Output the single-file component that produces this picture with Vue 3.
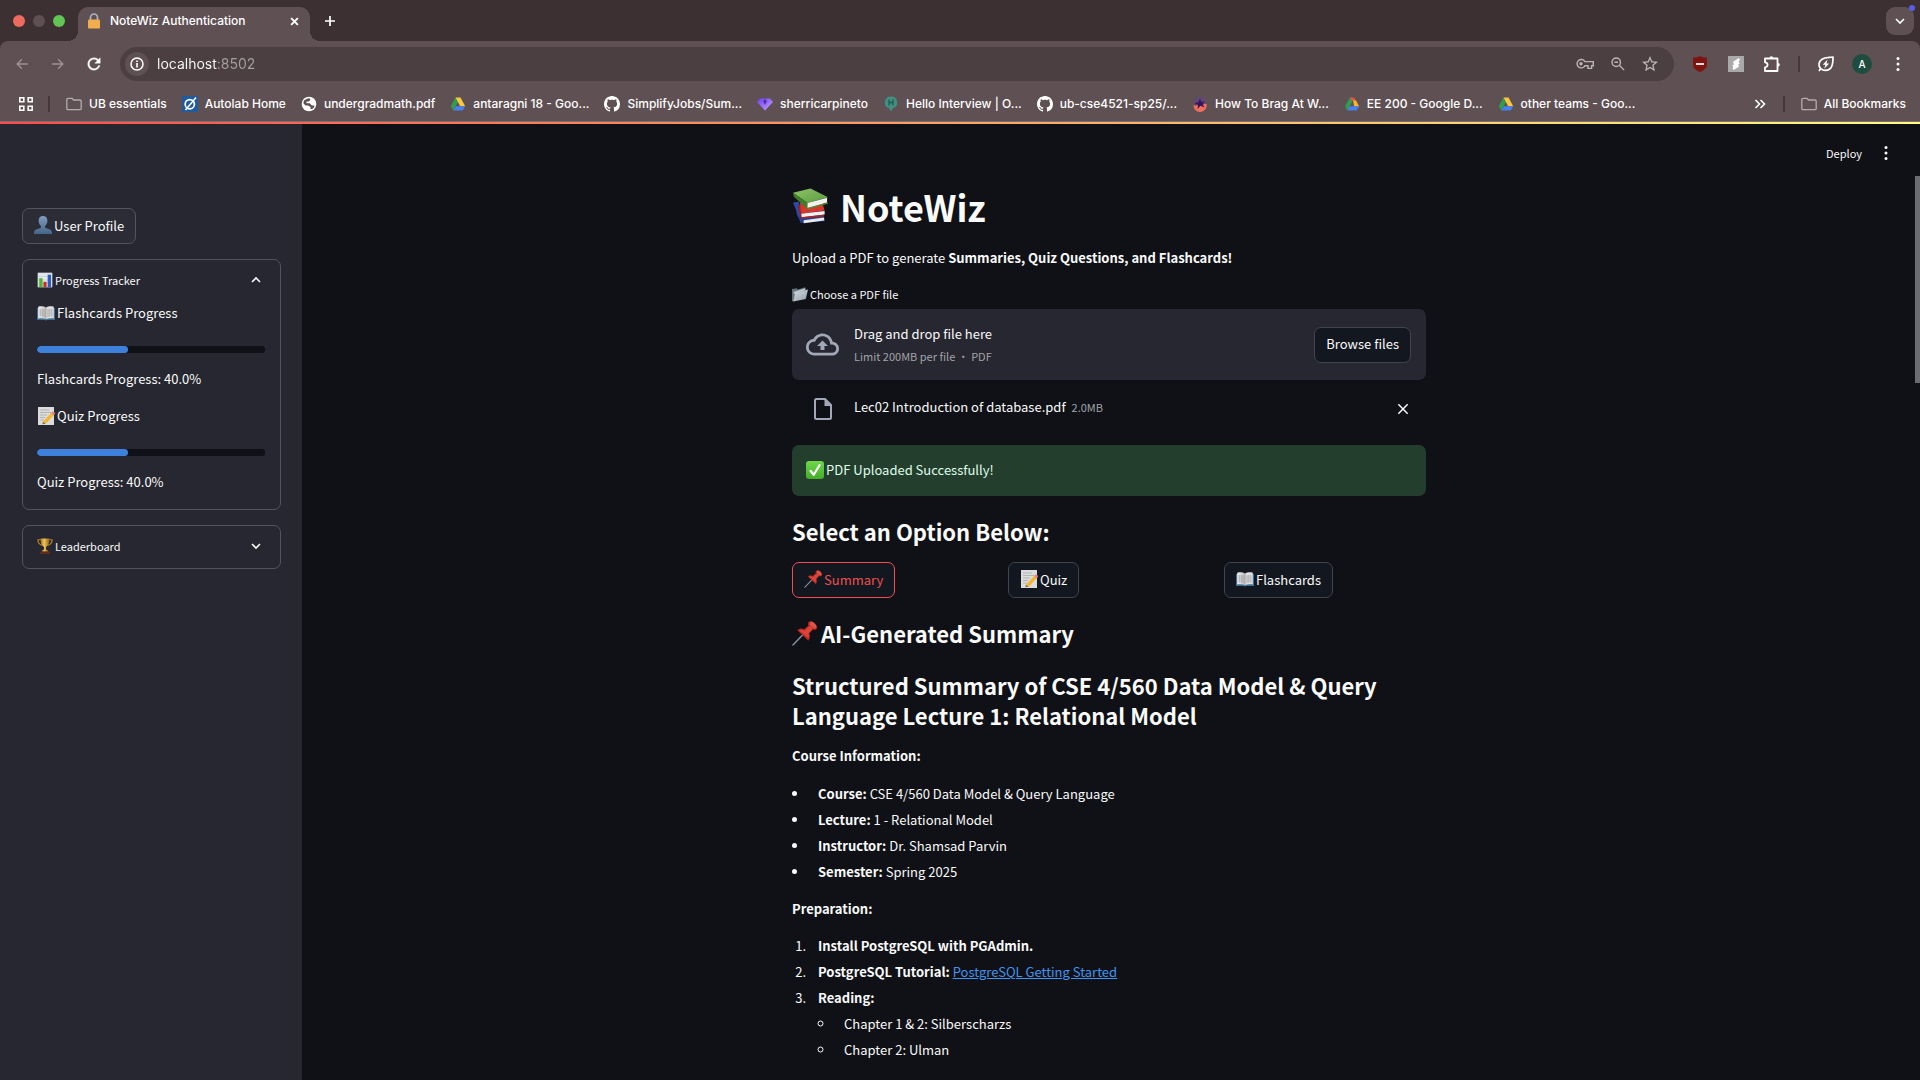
<script setup>
import { ref } from 'vue'

const address = ref('localhost:8502')
const selected = ref('summary')

const bookmarks = [
  { icon: 'folder', label: 'UB essentials' },
  { icon: 'autolab', label: 'Autolab Home' },
  { icon: 'globe', label: 'undergradmath.pdf' },
  { icon: 'drive', label: 'antaragni 18 - Goo...' },
  { icon: 'github', label: 'SimplifyJobs/Sum...' },
  { icon: 'gem', label: 'sherricarpineto' },
  { icon: 'hello', label: 'Hello Interview | O...' },
  { icon: 'github', label: 'ub-cse4521-sp25/...' },
  { icon: 'brag', label: 'How To Brag At W...' },
  { icon: 'drive-alt', label: 'EE 200 - Google D...' },
  { icon: 'drive', label: 'other teams - Goo...' },
]

const trackers = [
  { icon: 'book', name: 'Flashcards Progress', value: 40 },
  { icon: 'memo', name: 'Quiz Progress', value: 40 },
]

const options = [
  { key: 'summary', icon: 'pin', label: 'Summary' },
  { key: 'quiz', icon: 'memo', label: 'Quiz' },
  { key: 'flashcards', icon: 'book', label: 'Flashcards' },
]

const courseInfo = [
  { term: 'Course:', text: 'CSE 4/560 Data Model & Query Language' },
  { term: 'Lecture:', text: '1 - Relational Model' },
  { term: 'Instructor:', text: 'Dr. Shamsad Parvin' },
  { term: 'Semester:', text: 'Spring 2025' },
]
</script>

<template>
  <div class="window">
    <svg class="sprite" aria-hidden="true">
      <defs>
        <linearGradient id="g-user" x1="0" y1="0" x2="0" y2="1"><stop offset="0" stop-color="#7f9dbd" /><stop offset="1" stop-color="#456588" /></linearGradient>
        <linearGradient id="g-gold" x1="0" y1="0" x2="1" y2="0"><stop offset="0" stop-color="#a86f13" /><stop offset="0.4" stop-color="#f0c65a" /><stop offset="1" stop-color="#94600f" /></linearGradient>
        <linearGradient id="g-check" x1="0" y1="0" x2="0" y2="1"><stop offset="0" stop-color="#6fd84c" /><stop offset="1" stop-color="#43ad29" /></linearGradient>
        <linearGradient id="g-page" x1="0" y1="0" x2="1" y2="0"><stop offset="0" stop-color="#f3f3f3" /><stop offset="1" stop-color="#bdbdbd" /></linearGradient>
        <linearGradient id="g-folder" x1="0" y1="0" x2="1" y2="1"><stop offset="0" stop-color="#d5dce1" /><stop offset="1" stop-color="#929da6" /></linearGradient>
        <linearGradient id="g-green" x1="0" y1="0" x2="1" y2="1"><stop offset="0" stop-color="#8fc46b" /><stop offset="1" stop-color="#5a9a3d" /></linearGradient>
        <linearGradient id="g-gem" x1="0" y1="0" x2="1" y2="1"><stop offset="0" stop-color="#6d3df0" /><stop offset="1" stop-color="#c9a6ff" /></linearGradient>

        <!-- emoji -->
        <symbol id="i-user" viewBox="0 0 18 18">
          <path fill="url(#g-user)" d="M9 0C6.200 0 4.600 2 4.600 4.800c0 2.100.9 4.200 2.300 5.300v1.600L2.100 13.600C.7 14.200 0 15.300 0 17v1h18v-1c0-1.700-.7-2.800-2.100-3.400l-4.800-1.900v-1.600c1.400-1.100 2.300-3.200 2.300-5.300C13.400 2 11.800 0 9 0z" />
        </symbol>
        <symbol id="i-chart" viewBox="0 0 18 18">
          <path fill="#e4e9ee" d="M1 1h16v16H1z" />
          <path stroke="#b9c3cc" stroke-width=".6" fill="none" d="M1 5h16M1 9h16M1 13h16M1 1h16v16H1z" />
          <path fill="#4fb52f" d="M2.500 7h3.800v10H2.500z" />
          <path fill="#cf2c22" d="M7.200 11h3.600v6H7.200z" />
          <path fill="#2a5cc4" d="M12 3h3.700v14H12z" />
        </symbol>
        <symbol id="i-book" viewBox="0 0 18 18">
          <path fill="#3c6f92" d="M0 4h18v12h-8l-1 .8-1-.8H0z" />
          <path fill="url(#g-page)" d="M1.200 2.800C4 2 7 2.200 9 3.500v11.800c-2-1.200-5-1.400-7.800-.7z" />
          <path fill="#dfdfdf" d="M16.800 2.800C14 2 11 2.200 9 3.500v11.800c2-1.200 5-1.400 7.800-.7z" />
          <path stroke="#8f8f8f" stroke-width=".7" fill="none" d="M9 3.500v12M3.200 5v7.500M5.200 5v7.500M7 5.300V13M11 5.300V13M12.800 5v7.500M14.800 5v7.500" />
        </symbol>
        <symbol id="i-memo" viewBox="0 0 18 18">
          <path fill="#dcdcdc" d="M1 0h16v18H1z" />
          <path stroke="#a9a9a9" stroke-width=".8" fill="none" d="M3 3h9M3 5.500h11M3 8h7M3 10.500h5M3 13h4" />
          <path fill="#f2b632" d="M6 14.700 14 6l2.700 2.300-8 8.400z" />
          <path fill="#e27f7a" d="M14 6l1.300-1.300c1-.8 3.400 1.200 2.600 2.300l-1.200 1.300z" />
          <path fill="#8a6a35" d="M6 14.700l-.8 2.600 3.500-.6z" />
        </symbol>
        <symbol id="i-trophy" viewBox="0 0 18 18">
          <path fill="none" stroke="#b98223" stroke-width="1.300" d="M4.500 2H1c0 3.500 1.500 5.500 5 6.300M13.500 2H17c0 3.500-1.500 5.500-5 6.300" />
          <path fill="url(#g-gold)" d="M4 .5h10c0 5-1.300 8.600-4 9.500l.5 4h-3l.5-4C5.300 9.100 4 5.500 4 .5z" />
          <path fill="url(#g-gold)" d="M6 13.500h6l.7 2H5.300z" />
          <path fill="#5e2b18" d="M4 15.300h10L15 18H3z" />
        </symbol>
        <symbol id="i-books" viewBox="0 0 38 38">
          <path fill="#26409a" d="M4 25l5 11 25-2-4-10z" />
          <path fill="#e9e9ea" d="M12 33l21-2.600v3l-21 2.800z" />
          <path fill="#2c48a8" d="M1 15l6-1 3 14-3 2z" />
          <path fill="#9e2219" d="M6 18l3 13 2.500-2-2.500-11z" />
          <path fill="#d8362a" d="M8 15l23 0 2.500 8-24 3.500z" />
          <path fill="#f0efed" d="M9.500 26.500l24-3v3.600L10 30z" />
          <path fill="#a9251c" d="M9.500 30l23.500-2.400v1.600L10 31.600z" />
          <path fill="url(#g-green)" d="M1 5 19 .5 37 9.500 16 15.500z" />
          <path fill="#3f7d2a" d="M1 5l15 10.500V22L2 9z" />
          <path fill="#f1f1ef" d="M16 15.500 36 10v5l-20 5.500z" />
          <path fill="#4b8b32" d="M16 20.500 37 15v1.300L16 22z" />
        </symbol>
        <symbol id="i-files" viewBox="0 0 18 18">
          <path fill="#65717b" d="M0 3.500 5.500 2.500l1 1.500L15 1.500v5L2 17.500 0 17z" />
          <path fill="#bfc8ce" d="M2 6.500 15 2.500v2L2 9z" />
          <path fill="url(#g-folder)" d="M3.500 7.500 18 4l-2.500 10.500L1.500 17.500z" />
        </symbol>
        <symbol id="i-check" viewBox="0 0 18 18">
          <rect width="18" height="18" rx="3" fill="url(#g-check)" />
          <path fill="none" stroke="#fff" stroke-width="2.200" stroke-linecap="round" stroke-linejoin="round" d="M4.500 9.800 7.700 13.800 13.500 4.200" />
        </symbol>
        <symbol id="i-pin" viewBox="0 0 26 26">
          <path stroke="#8592a0" stroke-width="1.500" stroke-linecap="round" d="M1 25 12 13.500" />
          <path fill="#b3261e" d="M5.500 9.500c2.200-2 5-2.200 7.200-1l4.300-3.800c-.8-2-.2-4 1.500-4.500C21 0 26 4.500 26 7.500c-.5 1.700-2.500 2-4.500 1.300L18 13c1.200 2.500.8 5.200-1 7.500z" />
          <path fill="#d8433a" d="M7 9.700c2-1 4-.8 6 .3l5-4.600c2 .2 3.500 1.600 3.600 3L17 12.900c.8 1.800.8 3.600 0 5z" />
          <ellipse cx="22" cy="4.300" rx="4.300" ry="2.500" transform="rotate(44 22 4.300)" fill="#e05248" />
        </symbol>

        <!-- browser -->
        <symbol id="i-lock" viewBox="0 0 12 16">
          <path fill="none" stroke="#a9b7c4" stroke-width="1.700" d="M2.500 8V4.500a3.500 3.500 0 0 1 7 0V8" />
          <rect y="6.500" width="12" height="9" rx="1" fill="#f2ad4e" />
        </symbol>
        <symbol id="i-close" viewBox="0 0 24 24"><path fill="none" stroke="currentColor" stroke-width="2.200" d="M5 5l14 14M19 5 5 19" /></symbol>
        <symbol id="i-tabclose" viewBox="0 0 24 24"><path fill="none" stroke="currentColor" stroke-width="5" d="M3 3l18 18M21 3 3 21" /></symbol>
        <symbol id="i-plus" viewBox="0 0 12 12"><path fill="none" stroke="currentColor" stroke-width="1.700" d="M6 1v10M1 6h10" /></symbol>
        <symbol id="i-down" viewBox="0 0 12 12"><path fill="none" stroke="currentColor" stroke-width="1.600" d="M2 4l4 4 4-4" /></symbol>
        <symbol id="i-up" viewBox="0 0 12 12"><path fill="none" stroke="currentColor" stroke-width="1.600" d="M2 8l4-4 4 4" /></symbol>
        <symbol id="i-back" viewBox="0 0 24 24"><path fill="currentColor" d="M22 10.600H6.700l5.900-5.900L11 3.100 2.100 12l8.900 8.900 1.600-1.600-5.900-5.900H22z" /></symbol>
        <symbol id="i-forward" viewBox="0 0 24 24"><path fill="currentColor" d="M2 10.600h15.300l-5.900-5.900L13 3.100l8.900 8.900-8.900 8.900-1.600-1.600 5.900-5.900H2z" /></symbol>
        <symbol id="i-reload" viewBox="3 3 18 18"><path fill="currentColor" stroke="currentColor" stroke-width=".5" d="M17.650 6.350C16.200 4.900 14.210 4 12 4c-4.420 0-7.990 3.580-7.990 8s3.570 8 7.990 8c3.730 0 6.840-2.550 7.730-6h-2.080c-.82 2.330-3.040 4-5.650 4-3.310 0-6-2.690-6-6s2.690-6 6-6c1.660 0 3.140.69 4.220 1.780L13 11h7V4l-2.350 2.350z" /></symbol>
        <symbol id="i-info" viewBox="0 0 14 14"><circle cx="7" cy="7" r="6" fill="none" stroke="currentColor" stroke-width="1.500" /><path fill="currentColor" d="M6.200 3.400h1.600V5H6.200zM6.200 6h1.600v4.600H6.200z" /></symbol>
        <symbol id="i-key" viewBox="0 0 18 12">
          <path fill="none" stroke="currentColor" stroke-width="1.400" d="M8.900 3.600A4.200 4.200 0 1 0 8.900 7.800H12v2.600h3.600V7.800h1.700V3.600z" />
          <circle cx="5" cy="5.700" r="1.700" fill="currentColor" />
        </symbol>
        <symbol id="i-zoom" viewBox="0 0 16 16"><path fill="none" stroke="currentColor" stroke-width="1.600" d="M9.800 9.800 15 15M4 6h4" /><circle cx="6" cy="6" r="4.800" fill="none" stroke="currentColor" stroke-width="1.600" /></symbol>
        <symbol id="i-star" viewBox="2 2 20 20"><path fill="currentColor" d="M22 9.240l-7.190-.62L12 2 9.190 8.630 2 9.240l5.460 4.730L5.820 21 12 17.270 18.180 21l-1.630-7.030L22 9.240zM12 15.400l-3.760 2.270 1-4.280-3.320-2.880 4.380-.38L12 6.100l1.710 4.040 4.380.38-3.320 2.880 1 4.280L12 15.400z" /></symbol>
        <symbol id="i-shield" viewBox="0 0 16 16"><path fill="#7d1510" d="M8 0c2 1.300 4.500 1.700 7 1.700V8c0 4-3 6.500-7 8-4-1.500-7-4-7-8V1.700C3.500 1.700 6 1.300 8 0z" /><path fill="#efd9d8" d="M4 7h8v2H4z" /></symbol>
        <symbol id="i-scribe" viewBox="0 0 16 16"><rect width="16" height="16" fill="#a9a9a9" /><path fill="none" stroke="#fff" stroke-width="2.400" d="M11.500 3 5.500 7M11 6.500 5 10.500M10.500 9.500 5 13M5.500 7l5.500-.5M5 10.500l5.500-1" /></symbol>
        <symbol id="i-puzzle" viewBox="0 0 18 18"><path fill="none" stroke="currentColor" stroke-width="1.800" stroke-linejoin="round" d="M2 3.500h12.500V16H2v-3.700c3.400 0 3.400-5 0-5z" /><path fill="currentColor" d="M6.400 3.500c0-3 4-3 4 0zM14.500 7.800c3 0 3 4 0 4z" /></symbol>
        <symbol id="i-leaf" viewBox="0 0 18 18"><path fill="none" stroke="currentColor" stroke-width="1.700" stroke-linejoin="round" d="M2 16l1.700-2.400C1 11 1.500 6.500 5 4.200 8 2.200 12 2.700 16 2c0 4.500.2 8.500-2.500 11.300-2.600 2.700-6.800 2.900-9.800.3" /><path fill="currentColor" d="M10.500 4.500 5.800 9.800h2.600l-1.200 4 5-5.300H9.500z" /></symbol>
        <symbol id="i-dots" viewBox="0 0 4 16"><g fill="currentColor"><circle cx="2" cy="2.500" r="1.500" /><circle cx="2" cy="8" r="1.500" /><circle cx="2" cy="13.500" r="1.500" /></g></symbol>
        <symbol id="i-apps" viewBox="0 0 14 14"><path fill="none" stroke="currentColor" stroke-width="1.600" d="M.8.8h4v4h-4zM9.200.8h4v4h-4zM.8 9.200h4v4h-4zM9.200 9.200h4v4h-4z" /></symbol>
        <symbol id="i-more" viewBox="0 0 12 12"><path fill="none" stroke="currentColor" stroke-width="1.600" d="M1.500 2 5.500 6l-4 4M6.500 2l4 4-4 4" /></symbol>

        <!-- bookmarks -->
        <symbol id="i-folder" viewBox="0 0 16 16"><path fill="none" stroke="#b5acae" stroke-width="1.300" d="M.8 3.500a1.200 1.200 0 0 1 1.200-1.200h4l1.500 1.700H14a1.200 1.200 0 0 1 1.200 1.200V12.500a1.200 1.200 0 0 1-1.200 1.200H2A1.200 1.200 0 0 1 .8 12.500z" /></symbol>
        <symbol id="i-autolab" viewBox="0 0 16 16"><rect width="16" height="16" fill="#1f5b9d" /><circle cx="7.800" cy="8.200" r="4.600" fill="none" stroke="#fff" stroke-width="1.700" /><path stroke="#fff" stroke-width="1.500" d="M3.500 14 14 1.500" /></symbol>
        <symbol id="i-globe" viewBox="0 0 16 16"><circle cx="8" cy="8" r="7.300" fill="#fff" /><path fill="#5f5053" d="M3 4.500C5 3.800 6 2.200 8.500 2.300l1 1.700-2 1.500h-2v1.700h3.300l2 2.300h2.700c-.2 1.500-1 2.700-2.200 3.500L9.500 13v-2L7 9.500H4.700L2.600 7.800c-.2-1.200 0-2.300.4-3.300z" /></symbol>
        <symbol id="i-drive" viewBox="0 0 16 16"><path fill="#2f9e4f" d="M5.500 1.500 0.800 10.200l2.500 4.300L8 6z" /><path fill="#fbc93d" d="M5.500 1.500h5l4.700 8.700h-5z" /><path fill="#4a80ee" d="M5.800 10.200h9.400l-2.500 4.300H3.300z" /></symbol>
        <symbol id="i-drive-alt" viewBox="0 0 16 16"><path fill="#2f9e4f" d="M6 1.500 1 10.500l2.300 4L8 6V1.500z" /><path fill="#e6533f" d="M6 1.500h4l2 3.500H8z" /><path fill="#fbb42d" d="M9 4.500h3l3.200 6h-5z" /><path fill="#4a80ee" d="M5.800 10.200h9.400l-2.500 4.300H3.300z" /></symbol>
        <symbol id="i-github" viewBox="0 0 16 16"><path fill="#fff" d="M8 0C3.580 0 0 3.580 0 8c0 3.540 2.290 6.530 5.470 7.590.4.070.55-.17.55-.38 0-.19-.01-.82-.01-1.490-2.010.37-2.530-.49-2.690-.94-.09-.23-.48-.94-.82-1.130-.28-.15-.68-.52-.01-.53.63-.01 1.080.58 1.230.82.72 1.210 1.870.87 2.330.66.07-.52.28-.87.51-1.070-1.780-.2-3.640-.89-3.640-3.950 0-.87.31-1.590.82-2.150-.08-.2-.36-1.020.08-2.120 0 0 .67-.21 2.200.82.64-.18 1.320-.27 2-.27s1.360.09 2 .27c1.530-1.040 2.200-.82 2.200-.82.44 1.100.16 1.920.08 2.120.51.56.82 1.270.82 2.150 0 3.070-1.870 3.750-3.650 3.950.29.25.54.73.54 1.480 0 1.070-.01 1.930-.01 2.200 0 .21.15.46.55.38A8.010 8.010 0 0 0 16 8c0-4.420-3.580-8-8-8z" /></symbol>
        <symbol id="i-gem" viewBox="0 0 16 16"><path fill="url(#g-gem)" d="M3 2.500h10L16 6l-8 8.500L0 6z" /><path fill="#5a2bb8" d="M8 3l2 2-2 4-2-4z" /></symbol>
        <symbol id="i-hello" viewBox="0 0 16 16"><path fill="#3f9080" d="M8 .5a6 6 0 0 1 2 11.700L8 15.500l-2-3.300A6 6 0 0 1 8 .5z" /><path stroke="#24584e" stroke-width="1.300" d="M6 3.500v6M10 3.500v6M6 6.500h4" /></symbol>
        <symbol id="i-brag" viewBox="0 0 16 16"><circle cx="8" cy="6" r="6" fill="#5f4a70" /><path fill="#f0705c" d="M1.500 9C4 11 5 8 8 9s4-2 6.500-1c1 4.500-3 8-6.500 8S1.500 13 1.500 9z" /><path fill="#38125e" d="M8 2.500 9.300 6l3.700-.8L10.500 8l2 3.500L8.500 9.800 5.500 13 6 9 2.500 7l4-.8z" /></symbol>

        <!-- uploader -->
        <symbol id="i-cloud" viewBox="0 0 24 24"><path fill="currentColor" d="M19.350 10.040C18.670 6.590 15.640 4 12 4 9.110 4 6.600 5.640 5.350 8.040 2.340 8.360 0 10.910 0 14c0 3.310 2.690 6 6 6h13c2.760 0 5-2.240 5-5 0-2.640-2.050-4.780-4.650-4.960zM19 18H6c-2.210 0-4-1.790-4-4 0-2.050 1.530-3.760 3.560-3.970l1.070-.11.5-.95C8.080 7.140 9.940 6 12 6c2.620 0 4.880 1.860 5.390 4.430l.3 1.500 1.530.11c1.560.1 2.780 1.410 2.780 2.960 0 1.650-1.350 3-3 3zM8 13h2.550v3h2.900v-3H16l-4-4z" /></symbol>
        <symbol id="i-file" viewBox="0 0 18 22"><path fill="none" stroke="currentColor" stroke-width="2" stroke-linejoin="round" d="M2.500 1H11l6 6v12.500a1.500 1.500 0 0 1-1.500 1.500h-13A1.500 1.500 0 0 1 1 19.500v-17A1.500 1.500 0 0 1 2.500 1z" /><path fill="currentColor" d="M10.500 1v7H17z" /></symbol>
      </defs>
    </svg>

    <header class="chrome">
      <div class="tab-strip">
        <div class="lights"><i class="red"></i><i class="grey"></i><i class="green"></i></div>
        <div class="tab">
          <svg class="favicon"><use href="#i-lock" /></svg>
          <span class="tab-title">NoteWiz Authentication</span>
          <button class="icon-btn" aria-label="Close tab"><svg class="ic9"><use href="#i-tabclose" /></svg></button>
        </div>
        <button class="icon-btn new-tab" aria-label="New tab"><svg class="ic12"><use href="#i-plus" /></svg></button>
        <button class="icon-btn tab-search" aria-label="Search tabs"><svg class="ic12"><use href="#i-down" /></svg><i class="badge"></i></button>
      </div>

      <div class="toolbar">
        <nav class="nav-buttons">
          <button class="icon-btn dim" aria-label="Back"><svg class="ic14"><use href="#i-back" /></svg></button>
          <button class="icon-btn dim" aria-label="Forward"><svg class="ic14"><use href="#i-forward" /></svg></button>
          <button class="icon-btn" aria-label="Reload"><svg class="ic14"><use href="#i-reload" /></svg></button>
        </nav>
        <div class="omnibox">
          <button class="icon-btn site-info" aria-label="Site information"><svg class="ic14"><use href="#i-info" /></svg></button>
          <input v-model="address" class="address" type="text" aria-label="Address" spellcheck="false">
          <button class="icon-btn soft" aria-label="Passwords"><svg class="key"><use href="#i-key" /></svg></button>
          <button class="icon-btn soft" aria-label="Zoom"><svg class="ic14"><use href="#i-zoom" /></svg></button>
          <button class="icon-btn soft" aria-label="Bookmark this tab"><svg class="ic16"><use href="#i-star" /></svg></button>
        </div>
        <div class="extensions">
          <button class="icon-btn" aria-label="Ad blocker"><svg class="ic16"><use href="#i-shield" /></svg></button>
          <button class="icon-btn" aria-label="Scribe"><svg class="ic16"><use href="#i-scribe" /></svg></button>
          <button class="icon-btn" aria-label="Extensions"><svg class="ic18"><use href="#i-puzzle" /></svg></button>
          <i class="divider"></i>
          <button class="icon-btn" aria-label="Energy saver"><svg class="ic18"><use href="#i-leaf" /></svg></button>
          <button class="icon-btn avatar" aria-label="Profile">A</button>
          <button class="icon-btn" aria-label="Menu"><svg class="dots"><use href="#i-dots" /></svg></button>
        </div>
      </div>

      <nav class="bookmarks" aria-label="Bookmarks">
        <button class="icon-btn" aria-label="Apps"><svg class="ic14"><use href="#i-apps" /></svg></button>
        <i class="divider apps-divider"></i>
        <div class="bookmark-list">
          <a v-for="mark in bookmarks" :key="mark.label" href="#"><svg class="ic16"><use :href="`#i-${mark.icon}`" /></svg>{{ mark.label }}</a>
        </div>
        <button class="icon-btn more" aria-label="More bookmarks"><svg class="ic12"><use href="#i-more" /></svg></button>
        <i class="divider"></i>
        <a class="all-bookmarks" href="#"><svg class="ic16"><use href="#i-folder" /></svg>All Bookmarks</a>
      </nav>
    </header>

    <div class="decoration"></div>

    <div class="app">
      <aside class="sidebar">
        <button class="btn profile"><svg class="emoji"><use href="#i-user" /></svg>User Profile</button>

        <details class="expander" open>
          <summary><svg class="emoji small"><use href="#i-chart" /></svg>Progress Tracker<svg class="chevron"><use href="#i-up" /></svg></summary>
          <div class="expander-body">
            <section v-for="item in trackers" :key="item.name">
              <p><svg class="emoji"><use :href="`#i-${item.icon}`" /></svg>{{ item.name }}</p>
              <progress :value="item.value" max="100" :aria-label="item.name"></progress>
              <p>{{ item.name }}: {{ item.value.toFixed(1) }}%</p>
            </section>
          </div>
        </details>

        <details class="expander">
          <summary><svg class="emoji small"><use href="#i-trophy" /></svg>Leaderboard<svg class="chevron"><use href="#i-down" /></svg></summary>
        </details>
      </aside>

      <main class="main">
        <div class="app-menu">
          <button class="deploy">Deploy</button>
          <button class="icon-btn" aria-label="App menu"><svg class="dots"><use href="#i-dots" /></svg></button>
        </div>

        <div class="content">
          <h1><svg class="emoji title-emoji"><use href="#i-books" /></svg>NoteWiz</h1>
          <p class="intro">Upload a PDF to generate <strong>Summaries, Quiz Questions, and Flashcards!</strong></p>

          <label class="upload-label" for="pdf"><svg class="emoji small"><use href="#i-files" /></svg>Choose a PDF file</label>
          <input id="pdf" class="file-input" type="file" accept=".pdf">
          <div class="dropzone">
            <svg class="cloud"><use href="#i-cloud" /></svg>
            <div class="drop-text">
              <span>Drag and drop file here</span>
              <small>Limit 200MB per file • PDF</small>
            </div>
            <button class="btn">Browse files</button>
          </div>
          <div class="uploaded">
            <svg class="file-icon"><use href="#i-file" /></svg>
            <div class="file-name">Lec02 Introduction of database.pdf <small>2.0MB</small></div>
            <button class="icon-btn remove" aria-label="Remove file"><svg class="ic16"><use href="#i-close" /></svg></button>
          </div>

          <div class="success" role="status"><svg class="emoji"><use href="#i-check" /></svg>PDF Uploaded Successfully!</div>

          <h3>Select an Option Below:</h3>
          <div class="options">
            <div v-for="option in options" :key="option.key">
              <button class="btn" :class="{ active: selected === option.key }" @click="selected = option.key"><svg class="emoji"><use :href="`#i-${option.icon}`" /></svg>{{ option.label }}</button>
            </div>
          </div>

          <h3><svg class="emoji heading-emoji"><use href="#i-pin" /></svg>AI-Generated Summary</h3>

          <article class="summary">
            <h3>Structured Summary of CSE 4/560 Data Model &amp; Query Language Lecture 1: Relational Model</h3>
            <p><strong>Course Information:</strong></p>
            <ul>
              <li v-for="row in courseInfo" :key="row.term"><strong>{{ row.term }}</strong> {{ row.text }}</li>
            </ul>
            <p><strong>Preparation:</strong></p>
            <ol>
              <li><strong>Install PostgreSQL with PGAdmin.</strong></li>
              <li><strong>PostgreSQL Tutorial:</strong> <a href="#">PostgreSQL Getting Started</a></li>
              <li>
                <strong>Reading:</strong>
                <ul>
                  <li>Chapter 1 &amp; 2: Silberscharzs</li>
                  <li>Chapter 2: Ulman</li>
                </ul>
              </li>
            </ol>
          </article>
        </div>
        <div class="scroll-thumb"></div>
      </main>
    </div>
  </div>
</template>

<style>
body { background: #0f1116; }
</style>

<style scoped>
.window { display: flex; flex-direction: column; height: 100vh; overflow: hidden; color: #fafafa; font: 13px/23px "Noto Sans CJK SC", "Open Sans", sans-serif; }
.sprite { position: absolute; width: 0; height: 0; }
*, *::before, *::after { box-sizing: border-box; }
svg { flex: none; }
button { font: inherit; color: inherit; cursor: pointer; }
i { display: block; flex: none; }

.ic9 { width: 9px; height: 9px; }
.ic12 { width: 12px; height: 12px; }
.ic14 { width: 14px; height: 14px; }
.ic16 { width: 16px; height: 16px; }
.ic18 { width: 18px; height: 18px; }
.dots { width: 4px; height: 16px; }
.key { width: 18px; height: 12px; }
.icon-btn { display: flex; align-items: center; justify-content: center; flex: none; padding: 0; background: none; border: 0; }

/* browser frame */
.chrome { flex: none; background: #3c3033; color: #fff; font: 500 12px/16px Inter, "Liberation Sans", sans-serif; }
.tab-strip { display: flex; align-items: center; height: 41px; padding: 0 6px 0 13px; }
.lights { display: flex; gap: 8px; width: 65px; }
.lights i { width: 12px; height: 12px; border-radius: 50%; }
.red { background: #ed6a5e; }
.grey { background: #5f5053; }
.green { background: #61c554; }
.tab { position: relative; display: flex; align-items: center; align-self: flex-end; gap: 10px; width: 232px; height: 34px; padding: 0 11px 6px 10px; background: #5f5053; border-radius: 10px 10px 0 0; }
.tab::before, .tab::after { content: ""; position: absolute; bottom: 0; width: 10px; height: 10px; }
.tab::before { right: 100%; background: radial-gradient(circle at 0 0, transparent 10px, #5f5053 10px); }
.tab::after { left: 100%; background: radial-gradient(circle at 100% 0, transparent 10px, #5f5053 10px); }
.favicon { width: 12px; height: 16px; }
.tab-title { flex: 1; white-space: nowrap; }
.new-tab { margin-left: 14px; }
.tab-search { position: relative; width: 28px; height: 28px; margin-left: auto; background: #5f5053; border-radius: 9px; }
.badge { position: absolute; top: -2px; right: -1px; width: 6px; height: 6px; background: #5b5bea; border-radius: 50%; }
.toolbar { display: flex; align-items: center; height: 46px; padding: 0 12px 0 15px; background: #5f5053; border-radius: 8px 8px 0 0; }
.nav-buttons { display: flex; gap: 22px; width: 105px; }
.dim { color: #9c9194; }
.omnibox { display: flex; flex: 1; align-items: center; gap: 17px; height: 34px; padding: 0 16px 0 5px; background: #4b3f42; border-radius: 17px; }
.site-info { width: 24px; height: 24px; margin-right: -9px; background: #5f5053; border-radius: 50%; }
.address { flex: 1; min-width: 0; padding: 0; border: 0; outline: 0; font: 400 14px/20px Inter, "Liberation Sans", sans-serif; color: transparent; background: linear-gradient(90deg, #fff 60px, #a89fa1 60px); background-clip: text; -webkit-background-clip: text; }
.soft { color: #bcb4b6; }
.extensions { display: flex; align-items: center; gap: 16px; padding-left: 16px; }
.extensions .icon-btn { width: 20px; height: 20px; }
.divider { width: 2px; height: 16px; background: #44383b; }
.avatar { background: #1e4d40; border-radius: 50%; font-size: 10px; }
.bookmarks { display: flex; align-items: center; height: 34px; padding: 0 14px 0 19px; background: #5f5053; }
.bookmarks a { display: flex; align-items: center; gap: 7px; color: inherit; text-decoration: none; white-space: nowrap; }
.apps-divider { margin: 0 16px 0 15px; }
.bookmark-list { display: flex; flex: 1; gap: 15px; }
.more { margin-right: 17px; }
.all-bookmarks { margin-left: 16px; }
.decoration { flex: none; height: 3px; background: linear-gradient(90deg, #ff4b4b, #fffd80); border-top: 1px solid #7d7073; }

/* app */
.app { display: flex; flex: 1; min-height: 0; background: #0f1116; }
.sidebar { display: flex; flex-direction: column; align-items: flex-start; flex: none; gap: 15px; width: 302px; padding: 84px 21px 0 22px; background: #262730; }
.emoji { width: 18px; height: 18px; margin-right: 2px; }
.emoji.small { width: 16px; height: 16px; }
.emoji.title-emoji { width: 37px; height: 37px; margin-right: 11px; }
.emoji.heading-emoji { width: 25px; height: 25px; margin-right: 4px; }
.btn { display: inline-flex; align-items: center; height: 36px; padding: 0 11px 2px; background: #131720; border: 1px solid #41444c; border-radius: 7px; white-space: nowrap; }
.btn.active { color: #f0504f; border-color: #f0504f; }
.profile { background: #2b2c36; border-color: #53545b; }
.expander { width: 100%; border: 1px solid #53545b; border-radius: 7px; }
.expander summary { display: flex; align-items: center; padding: 10px 18px 11px 14px; list-style: none; font-size: 11px; line-height: 20px; cursor: pointer; }
.expander:not([open]) summary { padding: 10px 18px 12px 14px; }
.chevron { width: 12px; height: 12px; margin-left: auto; }
.expander-body { display: grid; gap: 14px; padding: 0 15px 16px 14px; }
.expander-body p { display: flex; align-items: center; margin: 0; }
progress { display: block; width: 100%; height: 7px; margin: 22px 0 14px; border: 0; appearance: none; background: #0f1116; border-radius: 4px; overflow: hidden; }
progress::-webkit-progress-bar { background: #0f1116; border-radius: 4px; }
progress::-webkit-progress-value { background: #3d81dd; border-radius: 4px; }

.main { position: relative; flex: 1; padding: 19px 32px 0; }
.app-menu { display: flex; align-items: center; justify-content: flex-end; gap: 22px; height: 20px; }
.deploy { padding: 0; background: none; border: 0; font-size: 11px; line-height: 20px; }
.scroll-thumb { position: absolute; top: 52px; right: 0; width: 5px; height: 207px; background: #6b6c6f; }
.content { width: calc(100% - 4px); max-width: 638px; margin: 19px auto 0; padding-right: 4px; }
h1, h3, p { margin: 0; }
h1 { display: flex; align-items: center; font-size: 36px; line-height: 48px; font-weight: 700; }
h3 { display: flex; align-items: center; margin-top: 20px; font-size: 22px; line-height: 30px; font-weight: 700; }
.intro { margin-top: 16px; }
.upload-label { display: flex; align-items: center; margin: 15px 0 5px; font-size: 11px; line-height: 20px; }
.file-input { position: absolute; width: 1px; height: 1px; opacity: 0; }
.dropzone { display: flex; align-items: center; gap: 15px; height: 71px; padding: 0 15px 0 14px; background: #262730; border-radius: 7px; }
.cloud { width: 33px; height: 33px; color: #a3a8b8; }
.drop-text { display: flex; flex: 1; flex-direction: column; padding-top: 1px; }
small { color: #a3a4a9; font-size: 11px; }
.uploaded { display: flex; align-items: center; height: 65px; padding: 0 15px 8px 22px; }
.file-icon { width: 18px; height: 22px; margin-right: 22px; color: #a3a8b8; }
.file-name { padding-bottom: 3px; }
.file-name small { margin-left: 3px; }
.remove { margin-left: auto; }
.success { display: flex; align-items: center; padding: 13px 14px 15px; background: #243e2d; border-radius: 7px; color: #dffde9; }
.options { display: grid; grid-template-columns: repeat(3, 1fr); gap: 14px; margin-top: 16px; }
.options > div { display: flex; }
.summary h3 { margin-top: 22px; }
.summary p { margin: 14px 0; }
.summary ul { padding-top: 1px; }
ul, ol { margin: 0; padding-left: 17px; }
li { margin-bottom: 3px; padding-left: 9px; }
li ul { margin-top: 2px; }
li:last-child { margin-bottom: 2px; }
.summary a { color: #4094f0; }
</style>
